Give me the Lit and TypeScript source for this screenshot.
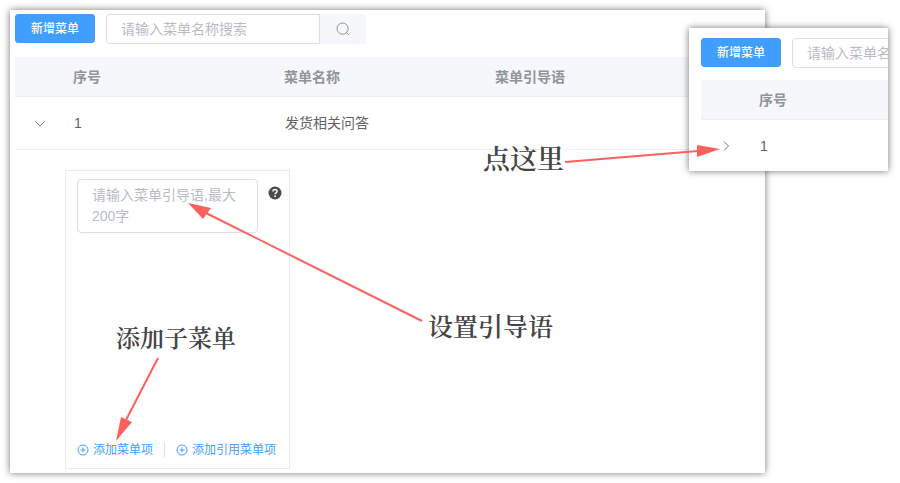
import { LitElement, html, css } from "lit";
import { customElement, property } from "lit/decorators.js";

@customElement("menu-panel")
class MenuPanel extends LitElement {
  @property({ type: Boolean }) expanded = false;
  @property({ type: Boolean }) compact = false;

  static styles = css`
    :host {
      display: block;
      box-sizing: border-box;
      overflow: hidden;
      background: #fff;
      padding: 4px 0 4px 5px;
      color: #606266;
      font: 14px/20px "Liberation Sans", "Noto Sans CJK SC", sans-serif;
      box-shadow: 0 0 7px rgba(0, 0, 0, 0.55);
    }
    :host([compact]) {
      padding: 10px 0 0 12px;
    }
    * {
      box-sizing: border-box;
    }
    button,
    input,
    textarea {
      font: inherit;
      margin: 0;
      outline: none;
    }
    .toolbar {
      display: flex;
      align-items: flex-start;
      margin-bottom: 13px;
    }
    :host([compact]) .toolbar {
      margin-bottom: 12px;
    }
    .primary {
      flex: none;
      width: 80px;
      height: 29px;
      padding: 0;
      margin-right: 11px;
      border: 1px solid #409eff;
      border-radius: 3px;
      background: #409eff;
      color: #fff;
      font-size: 12px;
      font-weight: 500;
    }
    .search {
      flex: none;
      display: flex;
      height: 30px;
    }
    .query {
      width: 214px;
      padding: 0 14px;
      border: 1px solid #dcdfe6;
      border-radius: 4px 0 0 4px;
      color: #606266;
    }
    ::placeholder {
      color: #b8bcc6;
      opacity: 1;
    }
    .go {
      display: grid;
      place-items: center;
      width: 46px;
      padding: 0;
      border: 0;
      border-radius: 0 4px 4px 0;
      background: #f5f7fa;
      color: #909399;
    }
    table {
      width: 100%;
      table-layout: fixed;
      border-collapse: separate;
      border-spacing: 0;
    }
    .c-toggle {
      width: 48px;
    }
    .c-data {
      width: 211px;
    }
    th,
    td {
      text-align: left;
      border-bottom: 1px solid #ebeef5;
    }
    th {
      height: 40px;
      padding: 0 10px;
      background: #f5f7fa;
      color: #909399;
      font-weight: 700;
    }
    td {
      height: 53px;
      padding: 0 11px;
    }
    .toggle {
      display: block;
      width: 28px;
      height: 20px;
      padding: 0;
      border: 0;
      background: none;
      color: #73767a;
    }
    .toggle svg {
      display: block;
      margin: 4px auto;
    }
    .detail {
      height: auto;
      padding: 20px 50px 0;
      border: 0;
    }
    .card {
      display: flex;
      flex-direction: column;
      justify-content: space-between;
      width: 225px;
      min-height: 299px;
      padding: 8px 7px 8px 11px;
      border: 1px solid #ebebeb;
    }
    .guide {
      display: flex;
      align-items: flex-start;
      gap: 10px;
    }
    .guide textarea {
      display: block;
      width: 181px;
      height: 54px;
      padding: 5px 14px;
      line-height: 21px;
      border: 1px solid #dcdfe6;
      border-radius: 4px;
      resize: none;
      overflow: hidden;
    }
    .help {
      display: block;
      margin-top: 7px;
    }
    .actions {
      display: flex;
      align-items: center;
      font-size: 12px;
    }
    .actions button {
      display: flex;
      align-items: center;
      gap: 4px;
      padding: 0;
      border: 0;
      background: none;
      color: #409eff;
      white-space: nowrap;
    }
    .rule {
      width: 1px;
      height: 14px;
      margin: 0 11px;
      background: #dcdfe6;
    }
  `;

  private plus() {
    return html`<svg width="12" height="12" viewBox="0 0 12 12" fill="none" stroke="currentColor" aria-hidden="true">
      <circle cx="6" cy="6" r="5" />
      <path d="M3.5 6h5M6 3.5v5" />
    </svg>`;
  }

  private detail() {
    return html`<tr>
      <td class="detail" colspan="5">
        <div class="card">
          <div class="guide">
            <textarea aria-label="菜单引导语" placeholder="请输入菜单引导语,最大200字"></textarea>
            <svg class="help" width="14" height="14" viewBox="0 0 14 14" aria-hidden="true">
              <circle cx="7" cy="7" r="6.5" fill="#4a4c50" />
              <path d="M5 5.6C5 4.2 5.9 3.6 7 3.6s2 .7 2 1.8c0 1.4-1.9 1.5-1.9 2.9" fill="none" stroke="#fff" stroke-width="1.5" />
              <circle cx="7.1" cy="10.2" r=".9" fill="#fff" />
            </svg>
          </div>
          <div class="actions">
            <button>${this.plus()}添加菜单项</button>
            <span class="rule"></span>
            <button>${this.plus()}添加引用菜单项</button>
          </div>
        </div>
      </td>
    </tr>`;
  }

  render() {
    return html`
      <div class="toolbar">
        <button class="primary">新增菜单</button>
        <div class="search">
          <input class="query" type="text" aria-label="菜单名称" placeholder="请输入菜单名称搜索" />
          <button class="go" aria-label="搜索">
            <svg width="14" height="14" viewBox="0 0 14 14" fill="none" stroke="currentColor">
              <circle cx="6.6" cy="6.6" r="5.6" />
              <path d="M10.6 10.6L13 13" />
            </svg>
          </button>
        </div>
      </div>
      <table>
        <colgroup>
          <col class="c-toggle" />
          <col class="c-data" />
          ${this.compact ? "" : html`<col class="c-data" /><col class="c-data" /><col />`}
        </colgroup>
        <thead>
          <tr>
            <th></th>
            <th>序号</th>
            ${this.compact ? "" : html`<th>菜单名称</th><th>菜单引导语</th><th></th>`}
          </tr>
        </thead>
        <tbody>
          <tr>
            <td>
              <button class="toggle" aria-label="展开" aria-expanded=${this.expanded ? "true" : "false"}>
                <svg width="12" height="12" viewBox="0 0 12 12" fill="none" stroke="currentColor">
                  <path d=${this.expanded ? "M1.5 4.5L6 9L10.5 4.5" : "M4 1.5L8.5 6L4 10.5"} />
                </svg>
              </button>
            </td>
            <td>1</td>
            ${this.compact ? "" : html`<td>发货相关问答</td><td></td><td></td>`}
          </tr>
          ${this.expanded ? this.detail() : ""}
        </tbody>
      </table>
    `;
  }
}

@customElement("app-root")
class AppRoot extends LitElement {
  static styles = css`
    :host {
      display: block;
      position: relative;
      overflow: hidden;
      background: #fff;
      padding: 10px 135px 10px 10px;
    }
    .inset {
      position: absolute;
      top: 28px;
      right: 12px;
      width: 199px;
      height: 143px;
    }
    .arrows {
      position: absolute;
      top: 0;
      pointer-events: none;
      stroke: #ff5f5f;
      stroke-width: 2;
      fill: #ff5f5f;
    }
    .left {
      left: 0;
    }
    .right {
      right: 0;
    }
    .note {
      position: absolute;
      margin: 0;
      color: #444;
      white-space: nowrap;
      font-family: "Noto Serif CJK SC", "Noto Sans CJK SC", serif;
      font-weight: 600;
      line-height: 32px;
    }
    .open {
      top: 142px;
      right: 336px;
      font-size: 27px;
    }
    .lead {
      top: 309px;
      left: 428px;
      font-size: 25px;
    }
    .child {
      top: 321px;
      left: 116px;
      font-size: 24px;
    }
  `;

  render() {
    return html`
      <menu-panel expanded></menu-panel>
      <menu-panel class="inset" compact></menu-panel>
      <svg class="arrows left" width="450" height="460" viewBox="0 0 450 460" aria-hidden="true">
        <path d="M422 321L206 213M158 358L126 420" />
        <path stroke="none" d="M188 203L211 208L203 219ZM116 441L121 417L132 422Z" />
      </svg>
      <svg class="arrows right" width="340" height="180" viewBox="560 0 340 180" aria-hidden="true">
        <path d="M565 162L698 151" />
        <path stroke="none" d="M720 149L697 145L697 157Z" />
      </svg>
      <p class="note open">点这里</p>
      <p class="note lead">设置引导语</p>
      <p class="note child">添加子菜单</p>
    `;
  }
}
